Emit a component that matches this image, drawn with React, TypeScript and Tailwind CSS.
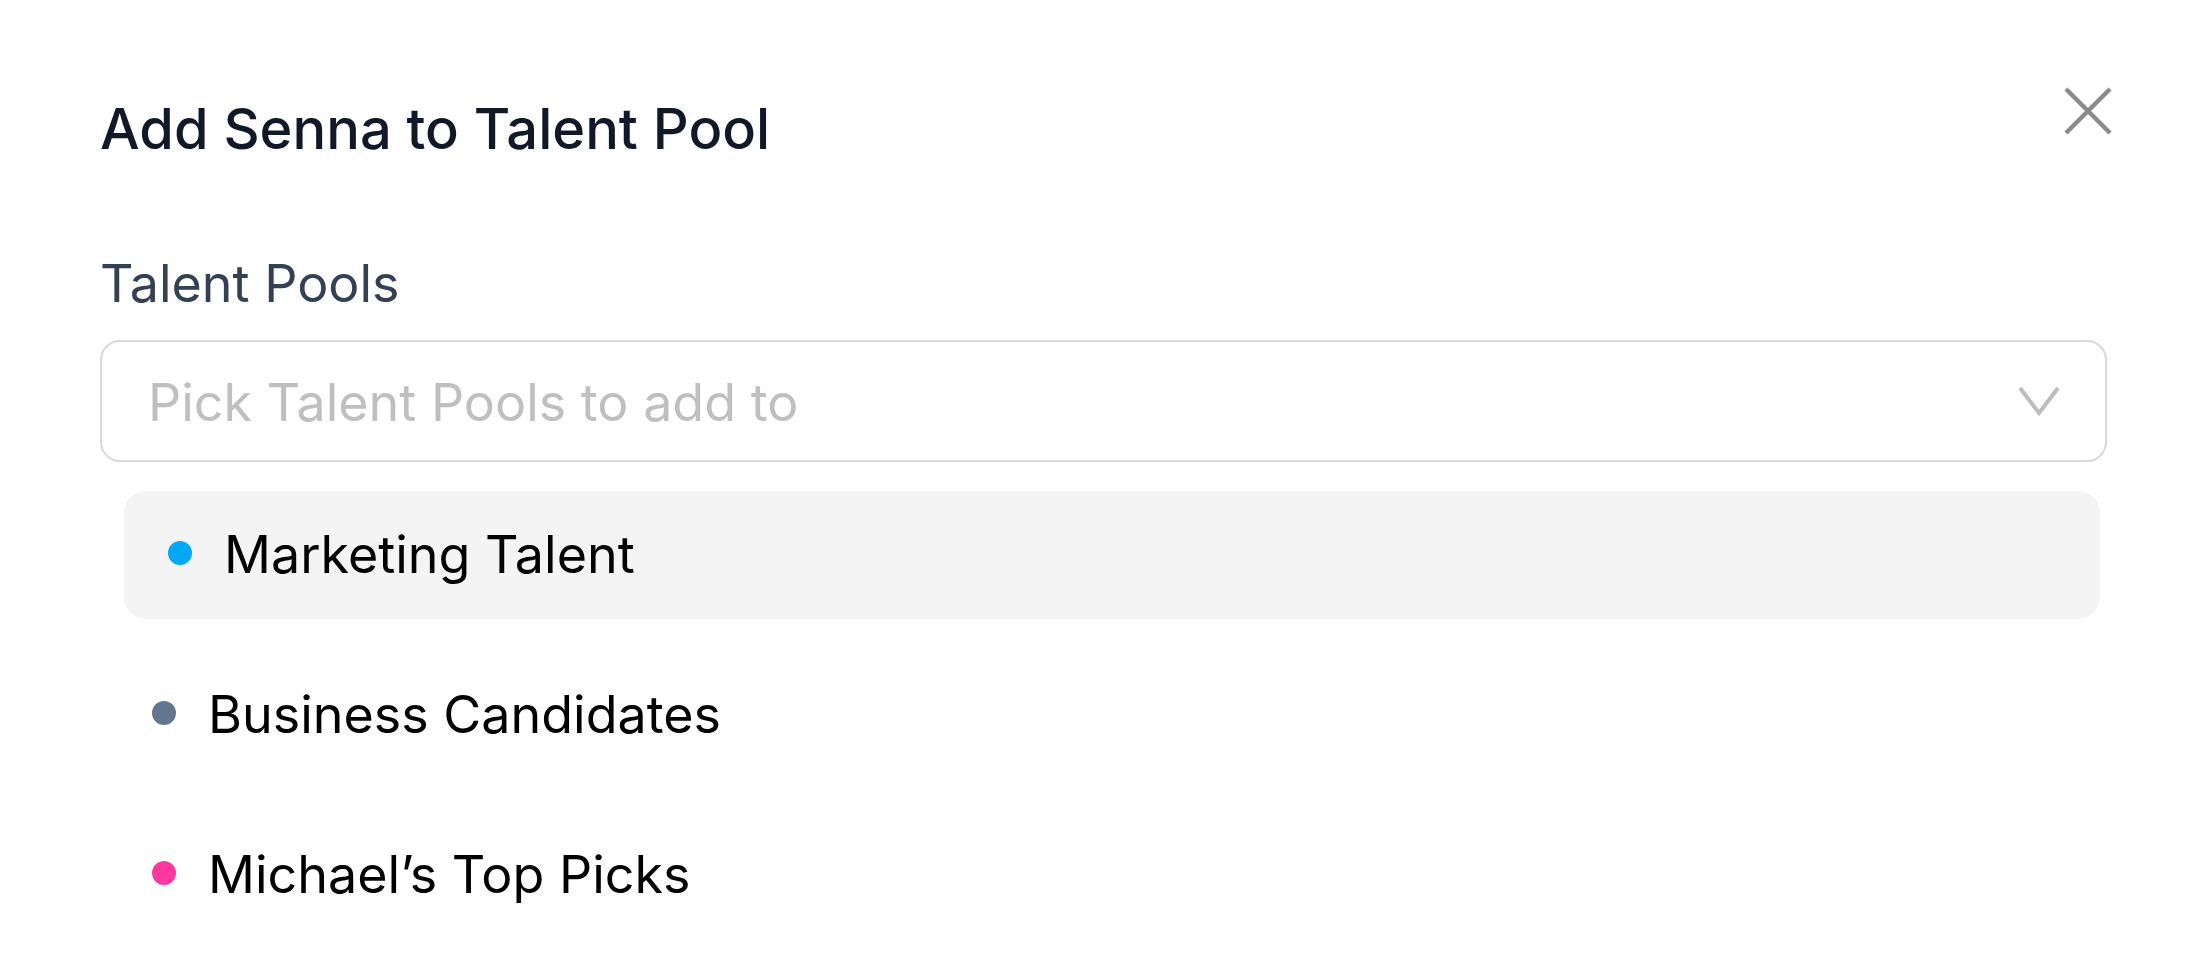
import React from 'react';

type Pool = { name: string; color: string; active?: boolean };

const pools: Pool[] = [
  { name: 'Marketing Talent', color: 'bg-[#03a9f4]', active: true },
  { name: 'Business Candidates', color: 'bg-[#627690]' },
  { name: 'Michael’s Top Picks', color: 'bg-[#ff389f]' },
];

const CloseIcon = () => (
  <svg width="48" height="48" viewBox="0 0 48 48" fill="none">
    <path d="M2 2L46 46M46 2L2 46" stroke="#8a8a8a" strokeWidth="4.5" />
  </svg>
);

const Chevron = () => (
  <svg width="42" height="30" viewBox="0 0 42 30" fill="none">
    <path d="M2 2L21 27L40 2" stroke="#bdbdbd" strokeWidth="4" />
  </svg>
);

export default function App() {
  return (
    <div className="w-[2200px] h-[960px] bg-white font-['Inter',sans-serif] overflow-hidden">
      <div className="pl-[100px] pr-[93px]">
        {/* Header */}
        <div className="flex items-start justify-between pt-[95px]">
          <h1 className="text-[56px] leading-[68px] font-medium text-[#111827]">Add Senna to Talent Pool</h1>
          <button className="-mt-[8px] -mr-[5px]">
            <CloseIcon />
          </button>
        </div>

        {/* Field label */}
        <div className="mt-[91px] text-[52px] leading-[60px] text-[#344054]">Talent Pools</div>

        {/* Select */}
        <div className="mt-[26px] h-[122px] rounded-[20px] border-2 border-[#d9d9d9] flex items-center justify-between pl-[46px] pr-[45px]">
          <span className="text-[52px] leading-[60px] text-[#bfbfbf] pt-[3px]">Pick Talent Pools to add to</span>
          <Chevron />
        </div>

        {/* Options */}
        <div className="mt-[29px] ml-[24px] mr-[7px] flex flex-col gap-[32px]">
          {pools.map((pool) => (
            <div
              key={pool.name}
              className={`h-[128px] flex items-center gap-[32px] rounded-[22px] ${
                pool.active ? 'bg-[#f4f4f4] pl-[44px]' : 'pl-[28px]'
              }`}
            >
              <span className={`w-[24px] h-[24px] rounded-full shrink-0 -mt-[4px] ${pool.color}`} />
              <span className="text-[52px] leading-[60px] text-black">{pool.name}</span>
            </div>
          ))}
        </div>
      </div>
    </div>
  );
}
